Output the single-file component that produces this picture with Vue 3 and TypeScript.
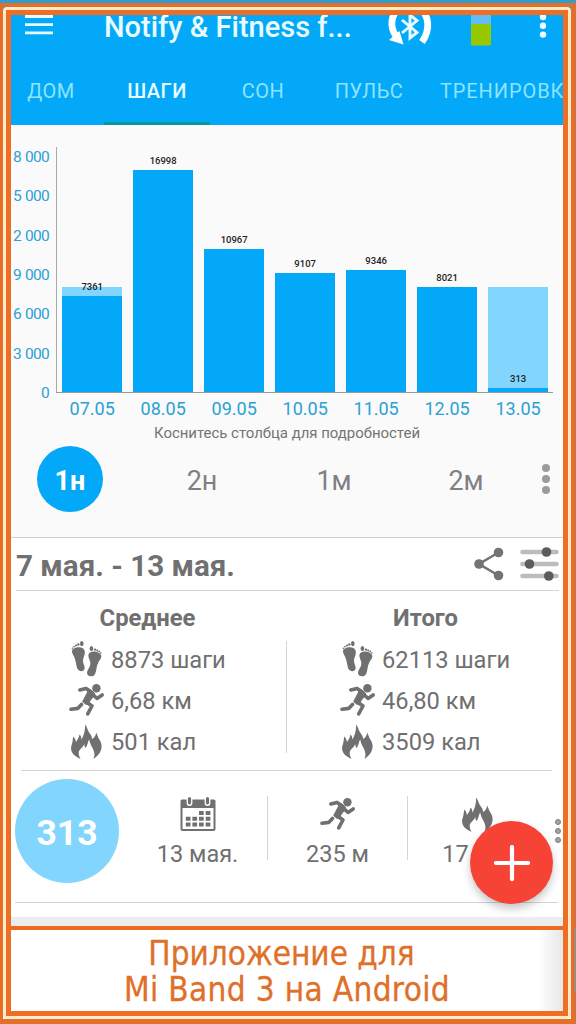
<script setup lang="ts">
interface Day { label: string; steps: number }
interface Stat { icon: string; text: string }
interface Summary { title: string; stats: Stat[] }

const tabs: string[] = ['ДОМ', 'ШАГИ', 'СОН', 'ПУЛЬС', 'ТРЕНИРОВКИ']
const ticks: string[] = ['18 000', '15 000', '12 000', '9 000', '6 000', '3 000', '0']
const goal = 8000
const days: Day[] = [
  { label: '07.05', steps: 7361 },
  { label: '08.05', steps: 16998 },
  { label: '09.05', steps: 10967 },
  { label: '10.05', steps: 9107 },
  { label: '11.05', steps: 9346 },
  { label: '12.05', steps: 8021 },
  { label: '13.05', steps: 313 },
]
const toPx = (steps: number): number => (steps * 235.5) / 18000
const ranges: string[] = ['1н', '2н', '1м', '2м']
const summaries: Summary[] = [
  {
    title: 'Среднее',
    stats: [
      { icon: 'feet', text: '8873 шаги' },
      { icon: 'run', text: '6,68 км' },
      { icon: 'flame', text: '501 кал' },
    ],
  },
  {
    title: 'Итого',
    stats: [
      { icon: 'feet', text: '62113 шаги' },
      { icon: 'run', text: '46,80 км' },
      { icon: 'flame', text: '3509 кал' },
    ],
  },
]
const details: Stat[] = [
  { icon: 'calendar', text: '13 мая.' },
  { icon: 'run', text: '235 м' },
  { icon: 'flame', text: '17 кал' },
]
</script>

<template>
  <div class="page">
    <svg class="defs" width="0" height="0" aria-hidden="true">
      <symbol id="feet" viewBox="0 0 36 37">
        <path d="M3 10.500C2.600 6 14.800 4 15.800 10.500C16.300 14 14 16.500 14 20C14 23 16 25 15.600 27.500C15 31.200 9.400 31 8 27C7 23 6.700 19 5.200 16C4.200 14 3.200 12.500 3 10.500Z" />
        <ellipse cx="12.800" cy="2.600" rx="1.800" ry="2.600" />
        <circle cx="9.300" cy="3.500" r="1.200" /><circle cx="7" cy="4.400" r="1" /><circle cx="5" cy="5.600" r=".9" /><circle cx="3.400" cy="7.200" r=".8" />
        <path d="M32.300 15.500C32.800 10.500 20.800 8 19.500 13.500C18.900 17 21.700 19.500 21.400 23C21.200 26 18.200 29 18 31.500C17.900 36.200 24.800 36.700 26.300 32.500C27.800 28.500 27.300 25.500 29.300 21.500C30.600 19 32 18 32.300 15.500Z" />
        <ellipse cx="22.400" cy="7.500" rx="1.800" ry="2.600" />
        <circle cx="26" cy="8.600" r="1.200" /><circle cx="28.200" cy="9.500" r="1" /><circle cx="30.200" cy="10.500" r=".9" /><circle cx="31.800" cy="12.100" r=".8" />
      </symbol>
      <symbol id="run" viewBox="0 0 36 34">
        <circle cx="27.400" cy="4.700" r="4.200" />
        <g fill="none" stroke="currentColor" stroke-linecap="round" stroke-linejoin="round" stroke-width="3.600">
          <path d="M10.800 6.400L17 4.900L22 8.200" />
          <path d="M23 10.500L28 14.900L33.200 11.400" />
          <path d="M17.500 18.500L23 22.500L18.700 30.300" />
          <path d="M12.500 20.900L8.700 24.900L2 25.800" />
        </g>
        <path d="M17.500 4.500L23 7.300L26 10.500L19.700 19L21 21.500L16.500 20.500L13.700 18L18.700 8.500Z" stroke="currentColor" stroke-linejoin="round" />
      </symbol>
      <symbol id="flame" viewBox="0 0 36 37">
        <path d="M16 1.500C18.500 4 18 7 20.500 10C22 12 23 13.500 23 16C25.500 15 26.700 12.500 27.200 9.500C28.500 12 29 15 31 17.500C34.500 23 32.500 31 24.300 36C27 31 24.500 27 22.700 23.500C21.500 21 20.500 19 20.300 16.500C18.700 18.500 19 22 16.500 25C15.500 24 15.500 22.500 15.300 21C14 24.500 9.700 26.500 9.700 30C9.700 32.500 10.500 34 11.500 36C3.500 32.500 .5 27.500 2.800 21.500C3.800 19 3.700 16 4.200 13.500C6 15 6.500 17 7 19C9 16 10 14.500 10.500 11.500C12.500 13 12 15 12.500 16.500C14.500 13 16.500 7.500 16 1.500Z" />
      </symbol>
      <symbol id="calendar" viewBox="0 0 36 37">
        <path fill-rule="evenodd" d="M2 3.500H34Q35.500 3.500 35.500 5V33Q35.500 35 33.500 35H2.500Q.5 35 .5 33V5Q.5 3.500 2 3.500ZM2.500 12V33H33.500V12Z" />
        <path d="M9.500 2.500V7M27.500 2.500V7" stroke="#fff" stroke-width="5.800" stroke-linecap="round" />
        <path d="M9.500 2.500V6.800M27.500 2.500V6.800" stroke="currentColor" stroke-width="3.200" stroke-linecap="round" />
        <path d="M19 15h4.700v4H19zM25.700 15h4.700v4h-4.700zM5.800 20.700h4.700v4H5.800zM12.400 20.700h4.700v4h-4.700zM19 20.700h4.700v4H19zM25.700 20.700h4.700v4h-4.700zM5.800 26.500h4.700v4H5.800zM12.400 26.500h4.700v4h-4.700zM19 26.500h4.700v4H19zM25.700 26.500h4.700v4h-4.700z" />
      </symbol>
    </svg>

    <header class="header">
      <div class="bar">
        <svg class="menu" width="28" height="20" viewBox="0 0 28 20"><path d="M0 1.500H28M0 9.700H28M0 17.800H28" stroke="#e9fbff" stroke-width="2.800" /></svg>
        <h1 class="title">Notify &amp; Fitness f...</h1>
        <svg class="sync" width="50" height="46" viewBox="0 0 50 46" fill="none">
          <path d="M14.500 7C5.500 16 4.500 27 11 36" stroke="#fff" stroke-width="6.800" />
          <path d="M4 40L18.500 44.500L14.500 31Z" fill="#fff" />
          <path d="M34.500 7C44 16 46 29 37 42" stroke="#fff" stroke-width="6.800" />
          <path d="M17 20L32 32.500L25 38V15L32 20.500L17 33" stroke="#e9fbff" stroke-width="2.900" />
        </svg>
        <svg class="battery" width="20" height="31" viewBox="0 0 20 31"><rect width="20" height="12" fill="#61bdf2" /><rect y="9" width="20" height="21.500" rx="1" fill="#97c900" /></svg>
        <svg class="more" width="8" height="28" viewBox="0 0 8 28" fill="#e9fbff"><circle cx="4" cy="5" r="3.200" /><circle cx="4" cy="13.800" r="3.200" /><circle cx="4" cy="22.600" r="3.200" /></svg>
      </div>
      <nav class="tabs">
        <span v-for="(tab, i) in tabs" :key="tab" class="tab" :class="{ active: i === 1 }">{{ tab }}</span>
      </nav>
    </header>

    <section class="chart">
      <div class="graph">
        <div class="ticks"><span v-for="t in ticks" :key="t">{{ t }}</span></div>
        <div class="plot">
          <div v-for="d in days" :key="d.label" class="bar-slot">
            <div v-if="d.steps < goal" class="goal" :style="{ height: toPx(goal) + 'px' }"></div>
            <div class="fill" :style="{ height: toPx(d.steps) + 'px' }"><span class="value">{{ d.steps }}</span></div>
          </div>
        </div>
      </div>
      <div class="dates"><span v-for="d in days" :key="d.label">{{ d.label }}</span></div>
      <p class="hint">Коснитесь столбца для подробностей</p>
      <div class="ranges">
        <span v-for="(r, i) in ranges" :key="r" class="range" :class="{ selected: i === 0 }"><span>{{ r }}</span></span>
        <svg class="range-more" width="10" height="32" viewBox="0 0 10 32" fill="#9b9b9b"><circle cx="5" cy="5" r="4" /><circle cx="5" cy="16" r="4" /><circle cx="5" cy="27" r="4" /></svg>
      </div>
    </section>

    <section class="period">
      <h2>7 мая. - 13 мая.</h2>
      <svg width="30" height="34" viewBox="0 0 30 34"><path d="M24.500 5.500L5 17L24.500 28.500" fill="none" stroke="#747474" stroke-width="2.600" /><g fill="#747474"><circle cx="24.500" cy="5.500" r="4.800" /><circle cx="5" cy="17" r="4.800" /><circle cx="24.500" cy="28.500" r="4.800" /></g></svg>
      <svg class="sliders" width="39" height="34" viewBox="0 0 39 34"><path d="M2.500 5H36.500M2.500 17H36.500M2.500 29H36.500" stroke="#bcbcbc" stroke-width="4.600" stroke-linecap="round" /><g fill="#5c5c5c"><circle cx="26.500" cy="5" r="4.800" /><circle cx="9.500" cy="17" r="4.800" /><circle cx="28.800" cy="29" r="4.800" /></g></svg>
    </section>

    <section class="summary">
      <div v-for="s in summaries" :key="s.title" class="column">
        <h3>{{ s.title }}</h3>
        <div v-for="st in s.stats" :key="st.text" class="stat">
          <svg class="icon"><use :href="'#' + st.icon" /></svg><span>{{ st.text }}</span>
        </div>
      </div>
    </section>

    <section class="day">
      <div class="total">313</div>
      <div v-for="d in details" :key="d.text" class="detail">
        <svg class="icon"><use :href="'#' + d.icon" /></svg><span>{{ d.text }}</span>
      </div>
      <svg class="day-more" width="8" height="26" viewBox="0 0 8 26" fill="#a2a2a2" stroke="#7f7f7f"><circle cx="4" cy="4" r="2.500" /><circle cx="4" cy="13" r="2.500" /><circle cx="4" cy="22" r="2.500" /></svg>
      <button class="fab" aria-label="+"><svg width="36" height="36" viewBox="0 0 36 36"><path d="M18 2V34M2 18H34" stroke="#fff" stroke-width="4.200" stroke-linecap="round" /></svg></button>
    </section>
    <div class="gap"></div>

    <footer class="caption"><span class="first">Приложение для</span><span class="second">Mi Band 3 на Android</span></footer>

    <div class="edge"></div>
    <div class="frame outer"></div>
    <div class="frame middle"></div>
    <div class="frame inner"></div>
    <div class="scroll-mark"></div>
  </div>
</template>

<style>
body { margin: 0; overflow: hidden; }
</style>

<style scoped>
.page { position: relative; width: 576px; height: 1024px; overflow: hidden; background: #fff; color: #707070; font-family: Roboto, "Noto Sans", sans-serif; box-sizing: border-box; }
.page * { box-sizing: border-box; }
h1, h2, h3, p { margin: 0; }
svg { display: block; flex: none; }
.defs { position: absolute; }
.icon { width: 36px; height: 37px; fill: currentColor; }
.header { height: 125px; background: #03a9f8; }
.bar { height: 57px; display: flex; align-items: flex-start; padding-left: 25px; }
.menu { margin-top: 15px; }
.title { width: 257px; margin: 11px 0 0 51px; font-size: 29px; line-height: 33px; font-weight: 500; color: #e9fbff; white-space: nowrap; }
.sync { margin-left: 24px; }
.battery { margin: 15px 0 0 36px; }
.more { margin: 12px 0 0 48px; }
.tabs { height: 68px; margin-left: -2px; display: grid; grid-template-columns: 106px 106px 106px 106px 154px; }
.tab { display: flex; align-items: center; justify-content: center; padding-top: 2px; font-size: 20px; letter-spacing: .5px; color: #8ee4ff; border-bottom: 3px solid transparent; white-space: nowrap; }
.tab.active { font-weight: 500; color: #e9fbff; border-bottom-color: #0798a0; }
.tab:last-child { justify-content: flex-start; padding-left: 18px; letter-spacing: .9px; overflow: hidden; }
.chart { height: 413px; background: #fafafa; border-bottom: 1px solid #cfcfcf; padding-top: 22px; }
.graph { height: 246px; display: flex; }
.ticks { width: 49px; height: 256px; display: flex; flex-direction: column; justify-content: space-between; align-items: flex-end; font-size: 15.500px; letter-spacing: -.7px; word-spacing: .8px; line-height: 20px; color: #2ba1d6; white-space: nowrap; }
.plot { width: 497px; margin-left: 7px; padding-left: 5px; border-left: 1px solid #aaa; border-bottom: 1px solid #999; display: flex; gap: 10.600px; }
.bar-slot { width: 60.400px; display: grid; align-items: end; }
.goal, .fill { grid-area: 1 / 1; }
.goal { background: #82d5fc; }
.fill { position: relative; background: #03a9f8; }
.value { position: absolute; left: 0; right: 0; bottom: 100%; margin-bottom: 3px; text-align: center; font-size: 9.500px; line-height: 12px; font-weight: 500; color: #222; }
.dates { height: 31px; padding-left: 62px; display: flex; gap: 10.600px; font-size: 18px; line-height: 32px; color: #2ba1d6; }
.dates span { width: 60.400px; text-align: center; }
.hint { font-size: 14.950px; line-height: 18px; height: 18px; text-align: center; color: #747474; padding-right: 2px; }
.ranges { height: 76px; display: flex; align-items: center; padding-left: 4px; margin-top: -1px; }
.range { width: 132px; display: flex; justify-content: center; font-size: 27px; padding-top: 3px; color: #808084; }
.range.selected { width: 66px; height: 66px; border-radius: 50%; margin: 0 33px; align-items: center; background: #03a9f8; color: #fff; font-weight: 700; font-size: 27px; }
.range-more { margin-left: 9px; }
.period { height: 53px; margin: 0 17px 0 16px; display: flex; align-items: center; border-bottom: 1px solid #d5d5d5; }
.period h2 { width: 458px; padding-top: 4px; font-size: 29.600px; line-height: 34px; font-weight: 700; white-space: nowrap; }
.sliders { margin-left: 16px; }
.summary { height: 180px; margin: 0 24px 0 21px; padding-left: 43px; border-bottom: 1px solid #d5d5d5; display: flex; }
.column { flex: none; width: 271px; position: relative; padding-left: 5px; }
.column:first-child::after { content: ""; position: absolute; left: 222px; top: 50px; height: 112px; width: 1px; background: #d5d5d5; }
.column h3 { width: 157px; height: 48px; padding-top: 13px; font-size: 23.800px; line-height: 28px; font-weight: 700; text-align: center; }
.column:last-child h3 { width: 171px; }
.stat { height: 41px; display: flex; align-items: center; gap: 6px; font-size: 23.700px; line-height: 28px; white-space: nowrap; }
.day { position: relative; height: 132px; margin: 0 18px 0 15px; display: flex; border-bottom: 1px solid #d5d5d5; }
.total { width: 104px; height: 104px; margin: 8px 9px 0 0; padding-top: 3px; border-radius: 50%; background: #82d5fc; color: #fff; font-size: 35.500px; font-weight: 700; display: flex; align-items: center; justify-content: center; }
.detail { width: 140px; height: 64px; margin-top: 25px; border-right: 1px solid #d5d5d5; display: flex; flex-direction: column; align-items: center; font-size: 23.500px; white-space: nowrap; }
.detail:nth-of-type(4) { border: 0; }
.detail span { line-height: 28px; margin-top: 7px; }
.day-more { position: absolute; right: -4px; top: 47px; }
.fab { position: absolute; left: 455px; top: 50px; width: 83px; height: 83px; padding: 0; border: 0; border-radius: 50%; background: #f74336; box-shadow: 0 5px 8px rgba(0, 0, 0, .22); display: flex; align-items: center; justify-content: center; z-index: 1; }
.gap { height: 23px; border-bottom: 9px solid #eceeee; }
.caption { height: 88px; border-top: 4px solid #ed6a20; color: #df7029; background: linear-gradient(90deg, transparent 538px, #e6e6e6 564px); font-family: "DejaVu Sans Condensed", "DejaVu Sans", Verdana, sans-serif; font-stretch: condensed; font-size: 33px; line-height: 36px; padding-top: 6px; display: flex; flex-direction: column; align-items: center; white-space: nowrap; -webkit-text-stroke: .3px #df7029; }
.first { margin-right: 13px; }
.second { margin-right: 2px; letter-spacing: .35px; }
.edge { position: absolute; inset: 0; border-top: 3px solid #2b9fd2; border-right: 1px solid #c4764c; }
.frame { position: absolute; pointer-events: none; }
.outer { inset: 3px 1px 0 0; border: 4px solid #e66e29; border-left-width: 3px; border-bottom-width: 5px; }
.middle { inset: 7px 5px 5px 3px; border: 3px solid #ffecc8; border-radius: 4px; }
.inner { inset: 10px 8px 8px 6px; border: 5px solid #ed6e24; }
.scroll-mark { position: absolute; right: 0; top: 928px; width: 2px; height: 64px; background: #a08a7c; }
</style>
